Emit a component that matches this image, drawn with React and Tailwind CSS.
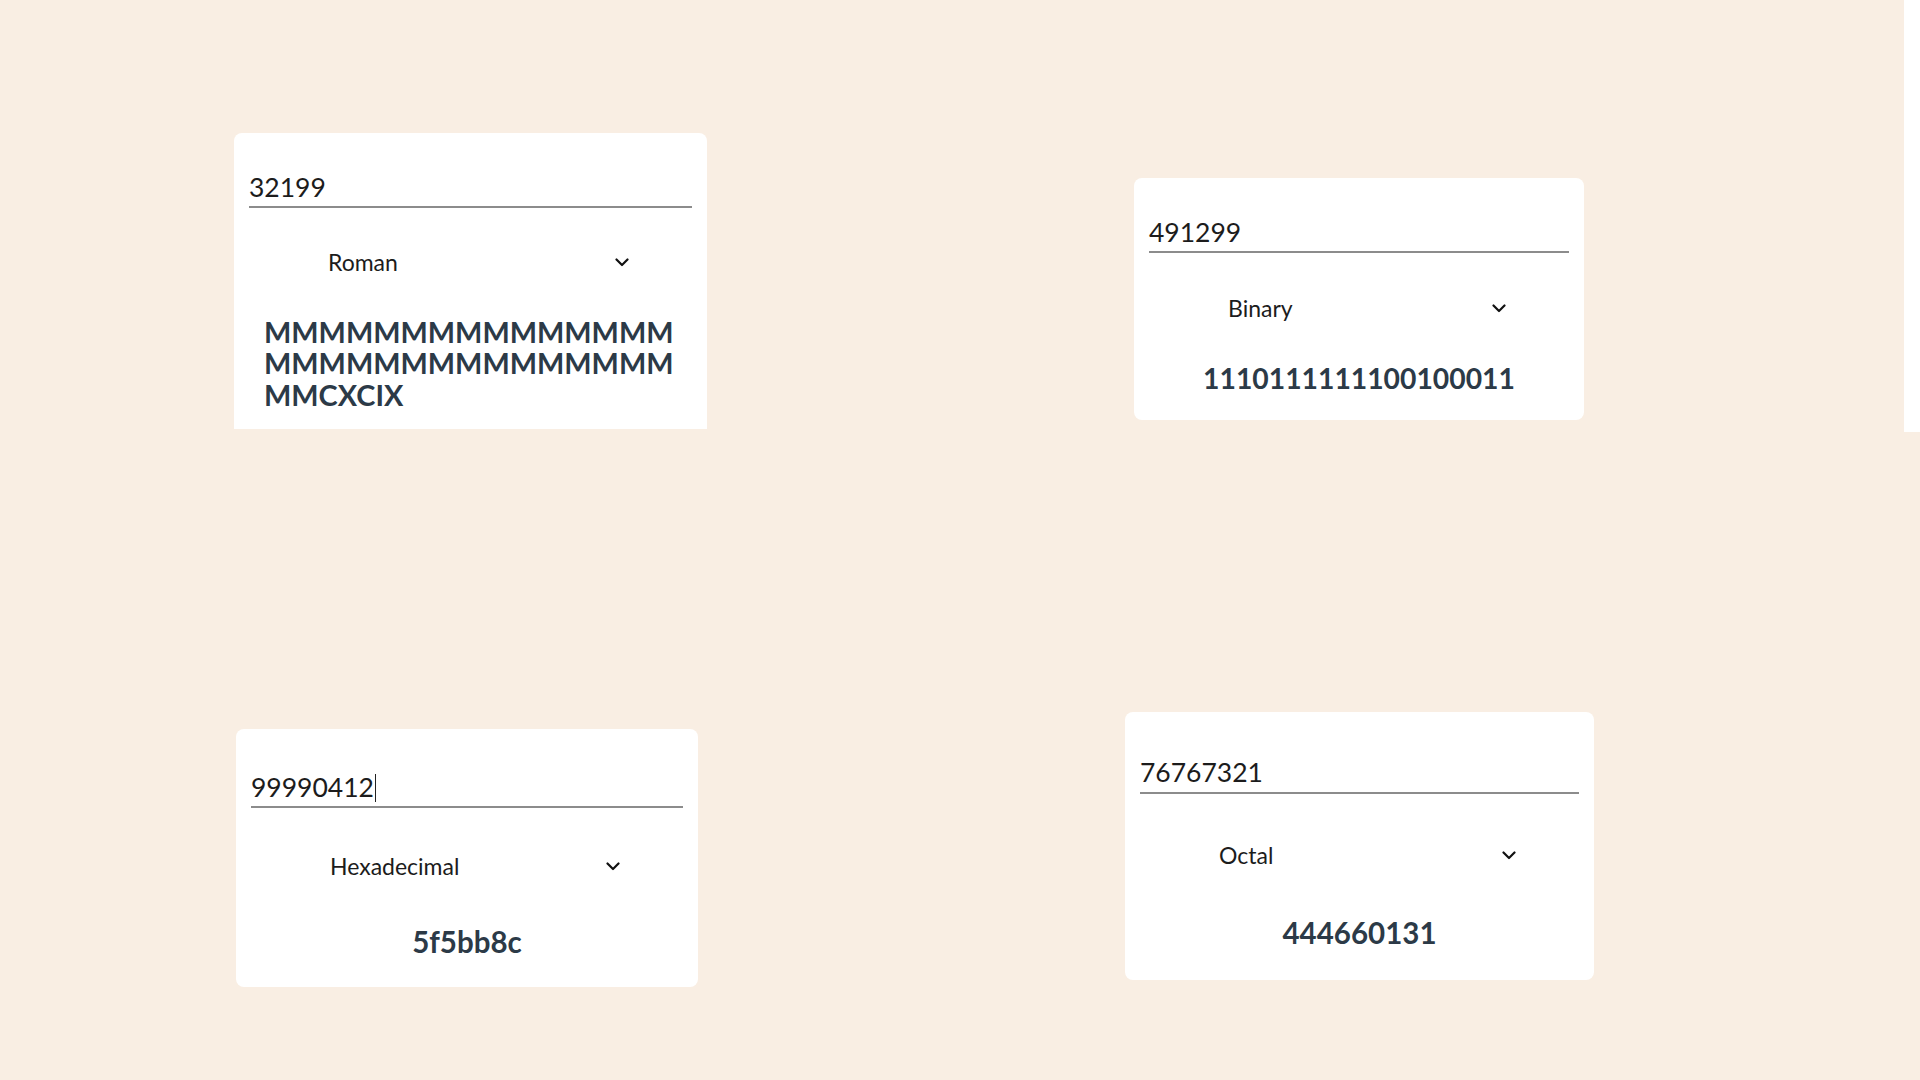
import React from 'react';

const Chevron = () => (
  <svg width="14" height="9" viewBox="0 0 14 9" fill="none" className="shrink-0">
    <polyline points="1.5,1.5 7,7 12.5,1.5" stroke="#111" strokeWidth="2.2" strokeLinecap="round" strokeLinejoin="round" />
  </svg>
);

const ConverterCard = ({ value, base, result, caret, cardClass, inputClass, selectClass, resultClass, resultText }) => {
  return (
    <div className={`bg-white px-[15px] ${cardClass}`}>
      <div className={`flex items-center border-b-2 border-[#8c8c8c] ${inputClass}`}>
        <span className="text-[26.5px] leading-[1.2] text-[#1c1c1c]">{value}</span>
        {caret && <span className="ml-[1px] w-[1.5px] h-[28px] bg-[#222]" />}
      </div>

      <div className={`flex items-center justify-between ml-[79px] mr-[63px] ${selectClass}`}>
        <span className="text-[23px] leading-[1.2] text-[#1c1c1c]">{base}</span>
        <Chevron />
      </div>

      <div className={`flex justify-center px-[15px] ${resultClass}`}>
        <p className={`font-bold text-[#2c3a47] break-all ${resultText}`}>{result}</p>
      </div>
    </div>
  );
};

export default function App() {
  return (
    <div className="min-h-screen flex bg-[#f9eee3]" style={{ fontFamily: 'Lato, "Open Sans", sans-serif' }}>
      <main className="flex-1 flex flex-col">
        {/* top row */}
        <div className="flex items-start">
          <div className="ml-[234px] mt-[133px] w-[473px]">
            <ConverterCard
              value="32199"
              base="Roman"
              result="MMMMMMMMMMMMMMMMMMMMMMMMMMMMMMMMCXCIX"
              cardClass="rounded-t-lg pt-[37px] pb-[19px]"
              inputClass="h-[38px]"
              selectClass="mt-[41px]"
              resultClass="mt-[39px]"
              resultText="text-[28.9px] leading-[31.5px]"
            />
          </div>
          <div className="ml-[427px] mt-[178px] w-[450px]">
            <ConverterCard
              value="491299"
              base="Binary"
              result="1110111111100100011"
              cardClass="rounded-lg pt-[37px] pb-[25px]"
              inputClass="h-[38px]"
              selectClass="mt-[42px]"
              resultClass="mt-[39px]"
              resultText="text-[28.3px] leading-[33px]"
            />
          </div>
        </div>

        {/* bottom row */}
        <div className="flex items-start">
          <div className="ml-[236px] mt-[300px] w-[462px]">
            <ConverterCard
              value="99990412"
              base="Hexadecimal"
              result="5f5bb8c"
              caret
              cardClass="rounded-lg pt-[40px] pb-[28px]"
              inputClass="h-[39px]"
              selectClass="mt-[45px]"
              resultClass="mt-[43px]"
              resultText="text-[29.5px] leading-[35px]"
            />
          </div>
          <div className="ml-[427px] mt-[283px] w-[469px]">
            <ConverterCard
              value="76767321"
              base="Octal"
              result="444660131"
              cardClass="rounded-lg pt-[41px] pb-[30px]"
              inputClass="h-[41px]"
              selectClass="mt-[48px]"
              resultClass="mt-[45px]"
              resultText="text-[29.5px] leading-[35px]"
            />
          </div>
        </div>
      </main>

      <aside className="w-[16px] flex flex-col">
        <div className="h-[432px] bg-white" />
      </aside>
    </div>
  );
}
